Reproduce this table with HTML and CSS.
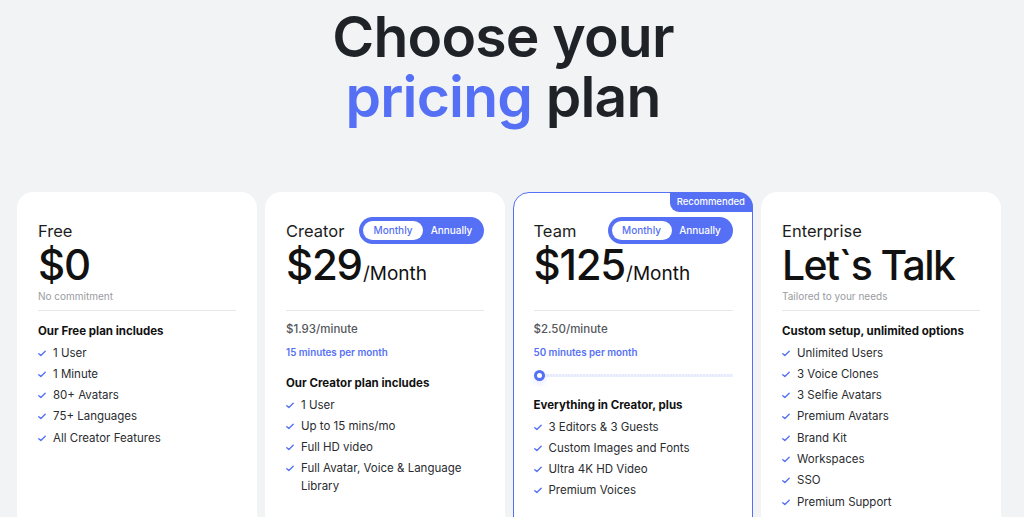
FILE: index.html
```html
<!DOCTYPE html>
<html>
<head>
<meta charset="utf-8">
<link rel="stylesheet" href="styles.css">
</head>
<body>
<div class="page">
  <h1 class="hero">Choose your<br><span class="accent">pricing</span> plan</h1>

  <div class="plans">
    <!-- Free -->
    <div class="card">
      <div class="head"><span class="name">Free</span></div>
      <div class="price">$0</div>
      <div class="sub">No commitment</div>
      <div class="divider"></div>
      <div class="incl">Our Free plan includes</div>
      <ul class="feats">
        <li><svg class="chk" viewBox="0 0 10 8"><path d="M1 4.2 3.6 6.6 9 1.2"/></svg><span>1 User</span></li>
        <li><svg class="chk" viewBox="0 0 10 8"><path d="M1 4.2 3.6 6.6 9 1.2"/></svg><span>1 Minute</span></li>
        <li><svg class="chk" viewBox="0 0 10 8"><path d="M1 4.2 3.6 6.6 9 1.2"/></svg><span>80+ Avatars</span></li>
        <li><svg class="chk" viewBox="0 0 10 8"><path d="M1 4.2 3.6 6.6 9 1.2"/></svg><span>75+ Languages</span></li>
        <li><svg class="chk" viewBox="0 0 10 8"><path d="M1 4.2 3.6 6.6 9 1.2"/></svg><span>All Creator Features</span></li>
      </ul>
    </div>

    <!-- Creator -->
    <div class="card">
      <div class="head">
        <span class="name">Creator</span>
        <div class="toggle"><span class="opt on">Monthly</span><span class="opt">Annually</span></div>
      </div>
      <div class="price">$29<span class="per">/Month</span></div>
      <div class="sub">&nbsp;</div>
      <div class="divider"></div>
      <div class="rate">$1.93/minute</div>
      <div class="mins">15 minutes per month</div>
      <div class="incl gap">Our Creator plan includes</div>
      <ul class="feats">
        <li><svg class="chk" viewBox="0 0 10 8"><path d="M1 4.2 3.6 6.6 9 1.2"/></svg><span>1 User</span></li>
        <li><svg class="chk" viewBox="0 0 10 8"><path d="M1 4.2 3.6 6.6 9 1.2"/></svg><span>Up to 15 mins/mo</span></li>
        <li><svg class="chk" viewBox="0 0 10 8"><path d="M1 4.2 3.6 6.6 9 1.2"/></svg><span>Full HD video</span></li>
        <li><svg class="chk" viewBox="0 0 10 8"><path d="M1 4.2 3.6 6.6 9 1.2"/></svg><span>Full Avatar, Voice &amp; Language Library</span></li>
      </ul>
    </div>

    <!-- Team -->
    <div class="card featured">
      <div class="badge">Recommended</div>
      <div class="head">
        <span class="name">Team</span>
        <div class="toggle"><span class="opt on">Monthly</span><span class="opt">Annually</span></div>
      </div>
      <div class="price">$125<span class="per">/Month</span></div>
      <div class="sub">&nbsp;</div>
      <div class="divider"></div>
      <div class="rate">$2.50/minute</div>
      <div class="mins">50 minutes per month</div>
      <div class="slider"><span class="knob"></span><span class="track"></span></div>
      <div class="incl gap wide">Everything in Creator, plus</div>
      <ul class="feats">
        <li><svg class="chk" viewBox="0 0 10 8"><path d="M1 4.2 3.6 6.6 9 1.2"/></svg><span>3 Editors &amp; 3 Guests</span></li>
        <li><svg class="chk" viewBox="0 0 10 8"><path d="M1 4.2 3.6 6.6 9 1.2"/></svg><span>Custom Images and Fonts</span></li>
        <li><svg class="chk" viewBox="0 0 10 8"><path d="M1 4.2 3.6 6.6 9 1.2"/></svg><span>Ultra 4K HD Video</span></li>
        <li><svg class="chk" viewBox="0 0 10 8"><path d="M1 4.2 3.6 6.6 9 1.2"/></svg><span>Premium Voices</span></li>
      </ul>
    </div>

    <!-- Enterprise -->
    <div class="card">
      <div class="head"><span class="name">Enterprise</span></div>
      <div class="price talk">Let`s Talk</div>
      <div class="sub">Tailored to your needs</div>
      <div class="divider"></div>
      <div class="incl">Custom setup, unlimited options</div>
      <ul class="feats">
        <li><svg class="chk" viewBox="0 0 10 8"><path d="M1 4.2 3.6 6.6 9 1.2"/></svg><span>Unlimited Users</span></li>
        <li><svg class="chk" viewBox="0 0 10 8"><path d="M1 4.2 3.6 6.6 9 1.2"/></svg><span>3 Voice Clones</span></li>
        <li><svg class="chk" viewBox="0 0 10 8"><path d="M1 4.2 3.6 6.6 9 1.2"/></svg><span>3 Selfie Avatars</span></li>
        <li><svg class="chk" viewBox="0 0 10 8"><path d="M1 4.2 3.6 6.6 9 1.2"/></svg><span>Premium Avatars</span></li>
        <li><svg class="chk" viewBox="0 0 10 8"><path d="M1 4.2 3.6 6.6 9 1.2"/></svg><span>Brand Kit</span></li>
        <li><svg class="chk" viewBox="0 0 10 8"><path d="M1 4.2 3.6 6.6 9 1.2"/></svg><span>Workspaces</span></li>
        <li><svg class="chk" viewBox="0 0 10 8"><path d="M1 4.2 3.6 6.6 9 1.2"/></svg><span>SSO</span></li>
        <li><svg class="chk" viewBox="0 0 10 8"><path d="M1 4.2 3.6 6.6 9 1.2"/></svg><span>Premium Support</span></li>
      </ul>
    </div>
  </div>
</div>
</body>
</html>
```

FILE: styles.css
```css
* { box-sizing: border-box; }
html, body { margin: 0; padding: 0; }
body {
  background: #f2f3f5;
  font-family: "Inter", "Noto Sans", sans-serif;
  color: #1b1d21;
  overflow: hidden;
  height: 517px;
}
.page { padding-top: 7px; }
.hero {
  margin: 0;
  text-align: center;
  font-size: 57px;
  line-height: 60px;
  font-weight: 600;
  letter-spacing: -0.8px;
  color: #1f2328;
  padding-right: 18px;
}
.accent { color: #5570f5; }

.plans {
  display: flex;
  gap: 8px;
  padding-left: 17px;
  margin-top: 65px;
}
.card {
  position: relative;
  width: 240px;
  height: 360px;
  flex: none;
  background: #fff;
  border-radius: 16px;
  padding: 25px 21px 0 21px;
}
.card.featured {
  border: 1.5px solid #5570f5;
  padding: 24px 19.5px 0 19.5px;
}
.badge {
  position: absolute;
  top: -1px;
  right: -1px;
  background: #5570f5;
  color: #fff;
  font-size: 9.5px;
  font-weight: 500;
  height: 20px;
  line-height: 20px;
  padding: 0 8px 0 7px;
  border-radius: 0 15px 0 9px;
}
.head {
  display: flex;
  align-items: center;
  justify-content: space-between;
  height: 27px;
}
.name {
  font-size: 16.5px;
  font-weight: 400;
  color: #1b1d21;
}
.toggle {
  display: flex;
  align-items: center;
  background: #5570f5;
  border-radius: 14px;
  height: 27px;
  width: 125px;
  padding: 0 4px;
}
.opt {
  font-size: 10px;
  font-weight: 500;
  color: #fff;
  flex: 1;
  text-align: center;
  line-height: 19px;
}
.opt.on {
  background: #fff;
  color: #5570f5;
  border-radius: 10px;
  flex: none;
  width: 60px;
}
.price {
  font-size: 42px;
  line-height: 42px;
  height: 42px;
  font-weight: 500;
  letter-spacing: -1.2px;
  color: #111;
  white-space: nowrap;
}
.price.talk { letter-spacing: -1.6px; font-size: 41px; }
.per {
  font-size: 19px;
  line-height: 0;
  letter-spacing: 0;
  font-weight: 400;
  margin-left: 1px;
}
.sub {
  margin-top: 3px;
  font-size: 10px;
  line-height: 14px;
  height: 14px;
  color: #9a9ca1;
}
.divider {
  height: 1px;
  background: #e6e7ea;
  margin-top: 7px;
}
.rate {
  margin-top: 10px;
  font-size: 11.5px;
  line-height: 16px;
  font-weight: 500;
  color: #55575c;
}
.mins {
  margin-top: 9px;
  font-size: 9.8px;
  line-height: 14px;
  font-weight: 600;
  color: #5570f5;
}
.incl {
  margin-top: 12px;
  font-size: 11.5px;
  line-height: 16px;
  font-weight: 700;
  color: #111;
}
.incl.gap { margin-top: 15px; }
.incl.gap.wide { margin-top: 16px; }
.slider {
  margin-top: 9px;
  height: 12px;
  display: flex;
  align-items: center;
}
.knob {
  width: 11px;
  height: 11px;
  border-radius: 50%;
  border: 3px solid #5570f5;
  background: #fff;
  box-shadow: 0 3px 5px rgba(85,112,245,0.15);
  flex: none;
  position: relative;
  z-index: 1;
}
.track {
  flex: 1;
  height: 3px;
  background: repeating-linear-gradient(90deg, #e6eafd 0 2px, #f3f5fe 2px 3px);
  margin-left: -1px;
}
.feats {
  list-style: none;
  margin: 4.5px 0 0 0;
  padding: 0;
}
.feats li {
  display: flex;
  align-items: flex-start;
  font-size: 11.5px;
  line-height: 18px;
  color: #2a2c30;
  margin-bottom: 3.3px;
}
.chk {
  width: 8px;
  height: 7px;
  flex: none;
  margin: 6px 7px 0 0;
  fill: none;
  stroke: #5570f5;
  stroke-width: 1.7;
  stroke-linecap: round;
  stroke-linejoin: round;
}
```
